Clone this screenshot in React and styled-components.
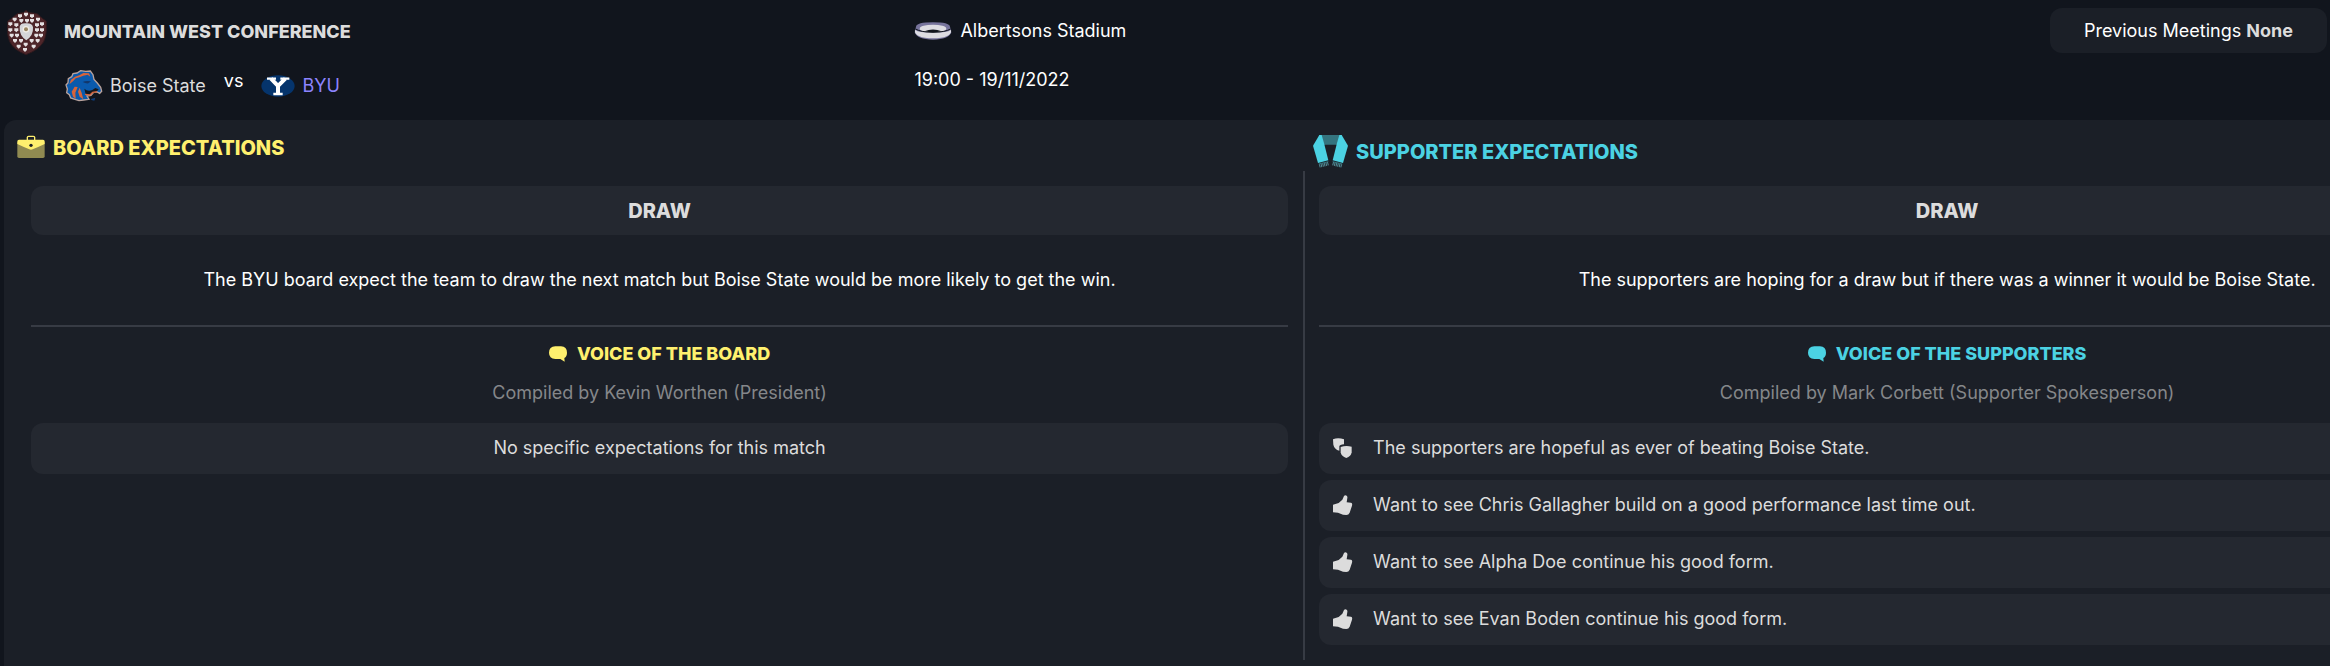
import React from "react";
import styled, { createGlobalStyle } from "styled-components";

const YELLOW = "#fff06e";
const CYAN = "#4bd2e3";

const supporterVoices = [
  { icon: "masks", text: "The supporters are hopeful as ever of beating Boise State." },
  { icon: "thumb", text: "Want to see Chris Gallagher build on a good performance last time out." },
  { icon: "thumb", text: "Want to see Alpha Doe continue his good form." },
  { icon: "thumb", text: "Want to see Evan Boden continue his good form." },
];

// [y, x...] small plates on the conference shield
const shieldPlates = [
  [12, 57],
  [17, 39, 75],
  [27, 23, 93],
  [31, 43, 60, 75],
  [41, 10, 105],
  [44, 28, 90],
  [59, 10, 28, 90, 105],
  [75, 14, 30, 88, 102],
  [91, 24, 42, 74, 92],
  [102, 56],
  [108, 35, 80],
  [118, 54],
];

const ShieldIcon = () => (
  <svg width="40" height="45" viewBox="0 0 120 135" aria-hidden="true">
    <path
      d="M57 1Q64 10 78 9Q92 8 100 20Q110 28 118 34Q120 75 110 95Q95 120 57 134Q20 120 8 95Q-2 70 2 34Q10 28 20 20Q30 8 42 9Q52 9 57 1Z"
      fill="#4d2529"
      stroke="#2f191d"
      strokeWidth="3"
    />
    {shieldPlates.map(([y, ...xs]) =>
      xs.map((x) => (
        <path key={`${x}-${y}`} d={`M${x - 6} ${y - 4}h12v6l-6 6l-6-6Z`} fill="#e4e0e2" />
      ))
    )}
    <path d="M38 50Q40 39 57 40Q76 39 78 52Q80 76 58 91Q36 76 38 50Z" fill="#d5d5d8" />
    <circle cx="57" cy="58" r="10" fill="#f0ece4" />
    <circle cx="57" cy="58" r="6" fill="#9a8662" />
  </svg>
);

const BroncoIcon = () => (
  <svg width="38" height="32" viewBox="0 0 114 96" aria-hidden="true">
    <path
      d="M3 45L9 38L10 26L20 20L24 11L36 9L47 2L62 4L76 3L84 14L87 28L97 39L107 52L110 64L104 70L96 66L86 67L78 76L66 78L72 88L56 90L42 92L30 88L17 84L13 74L5 68L7 57Z"
      fill="#0a5aad"
      stroke="#b9a29c"
      strokeWidth="4"
    />
    <path
      d="M13 43L18 29L30 20L43 16L55 9L72 10L76 20L68 14L55 17L43 22L32 25L24 34Z"
      fill="#d8643a"
    />
    <path d="M29 50L20 65L24 80L32 86L31 68L38 51Z" fill="#d8643a" />
    <path d="M44 53L39 65L44 80L55 88L50 69Z" fill="#d8643a" />
    <path d="M53 36Q62 31 78 34L70 40Q62 41 53 36Z" fill="#12376b" />
    <path d="M58 56Q68 66 82 60L91 54L101 58L94 66L84 68L75 75L62 73Z" fill="#15181f" />
    <path d="M60 73L75 75L83 67L96 65" fill="none" stroke="#d8643a" strokeWidth="4" />
    <path d="M78 87L91 83L88 92L79 90Z" fill="#103d79" />
  </svg>
);

const CougarsIcon = () => (
  <svg width="34" height="22" viewBox="0 0 102 66" aria-hidden="true">
    <ellipse cx="51" cy="33" rx="50" ry="32" fill="#05346c" />
    <g fill="none" stroke="#fff">
      <path d="M30 11L51 33L73 11M51 31V56" strokeWidth="12" />
      <path d="M18 11H45M58 11H85M37 57H65" strokeWidth="7" />
    </g>
  </svg>
);

const StadiumIcon = () => (
  <svg width="38" height="18" viewBox="0 0 114 54" aria-hidden="true">
    <path d="M6 14Q8 1 57 1Q106 1 108 14L112 31Q104 53 57 53Q10 53 2 31Z" fill="#77749c" />
    <ellipse cx="57" cy="20" rx="40" ry="12" fill="#dddce2" />
    <path d="M3 24Q15 32 57 32Q99 32 111 24Q115 48 57 49Q-1 48 3 24Z" fill="#dddce2" />
    <path d="M5 21Q18 30 57 31Q96 30 109 21" fill="none" stroke="#11151d" strokeWidth="3" />
    <path d="M31 28Q57 17 83 28Q57 34 31 28Z" fill="#11151d" />
  </svg>
);

const BriefcaseIcon = () => (
  <svg width="28" height="25" viewBox="0 0 84 75" aria-hidden="true">
    <path d="M31 17V7Q31 4 35 4H49Q53 4 53 7V17" fill="none" stroke={YELLOW} strokeWidth="4" />
    <path d="M1 22H83V64Q83 69 78 69H6Q1 69 1 64Z" fill="#908a51" />
    <path d="M6 14H78Q83 14 83 19V27Q62 37 47 43Q42 45 37 43Q22 37 1 27V19Q1 14 6 14Z" fill={YELLOW} />
    <circle cx="42" cy="31" r="5" fill="#1b1f27" />
  </svg>
);

const ScarfIcon = () => (
  <svg width="35" height="33" viewBox="0 0 105 99" aria-hidden="true">
    <path d="M18 0H87L78 29H27Z" fill="#34747f" />
    <path d="M19 0H26L34 28L46 76L15 84L0 32Z" fill={CYAN} />
    <path d="M86 0H79L71 28L59 76L90 84L105 32Z" fill={CYAN} />
    <path d="M17 87L46 80M88 87L59 80" stroke="#34747f" strokeWidth="3" />
    <path d="M19 93L47 86M86 93L58 86" stroke="#55919b" strokeWidth="10" strokeDasharray="3 2" />
  </svg>
);

const BubbleIcon = ({ color }) => (
  <svg width="18" height="16" viewBox="0 0 54 48" aria-hidden="true">
    <path
      d="M19 1H36Q54 2 54 20Q54 32 46 36L47 47L34 39H19Q0 38 0 20Q0 2 19 1Z"
      fill={color}
    />
  </svg>
);

const MasksIcon = () => (
  <svg width="20" height="20" viewBox="0 0 60 60" aria-hidden="true">
    <path d="M0 4Q15-3 33 4V19Q20 20 19 25V38Q4 34 1 20Z" fill="#dcdcdc" />
    <path d="M23 27Q39 21 56 26V43Q54 56 40 60Q25 56 23 43Z" fill="#dcdcdc" />
  </svg>
);

const ThumbIcon = () => (
  <svg width="20" height="20" viewBox="0 0 60 60" aria-hidden="true">
    <path
      d="M0 29L17 24L28 14L33 3Q36-1 41 2Q44 4 43 9L41 22L54 23Q59 24 57 32L50 53Q47 60 40 60L30 59L15 53L0 52Z"
      fill="#dcdcdc"
    />
  </svg>
);

const App = () => {
  return (
    <>
      <GlobalStyle />
      <Page>
        <Header>
          <Fixture>
            <Competition>
              <ShieldIcon />
              <CompetitionName>MOUNTAIN WEST CONFERENCE</CompetitionName>
            </Competition>
            <Teams>
              <TeamLink href="#boise-state">
                <BroncoIcon />
                Boise State
              </TeamLink>
              <Versus>vs</Versus>
              <TeamLink href="#byu" $own>
                <CougarsIcon />
                BYU
              </TeamLink>
            </Teams>
          </Fixture>
          <Venue>
            <VenueLine>
              <StadiumIcon />
              Albertsons Stadium
            </VenueLine>
            <VenueLine>19:00 - 19/11/2022</VenueLine>
          </Venue>
          <MeetingsButton type="button">
            Previous Meetings <strong>None</strong>
          </MeetingsButton>
        </Header>

        <Panel>
          <section>
            <SectionTitle $color={YELLOW}>
              <BriefcaseIcon />
              BOARD EXPECTATIONS
            </SectionTitle>
            <SectionBody>
              <Outcome>DRAW</Outcome>
              <Summary>
                The BYU board expect the team to draw the next match but Boise State would be more
                likely to get the win.
              </Summary>
              <VoiceTitle $color={YELLOW}>
                <BubbleIcon color={YELLOW} />
                VOICE OF THE BOARD
              </VoiceTitle>
              <Compiled>Compiled by Kevin Worthen (President)</Compiled>
              <VoiceList>
                <VoiceItem $center>No specific expectations for this match</VoiceItem>
              </VoiceList>
            </SectionBody>
          </section>

          <section>
            <SectionTitle $color={CYAN} $divided>
              <ScarfIcon />
              SUPPORTER EXPECTATIONS
            </SectionTitle>
            <SectionBody $divided>
              <Outcome>DRAW</Outcome>
              <Summary>
                The supporters are hoping for a draw but if there was a winner it would be Boise
                State.
              </Summary>
              <VoiceTitle $color={CYAN}>
                <BubbleIcon color={CYAN} />
                VOICE OF THE SUPPORTERS
              </VoiceTitle>
              <Compiled>Compiled by Mark Corbett (Supporter Spokesperson)</Compiled>
              <VoiceList>
                {supporterVoices.map((voice) => (
                  <VoiceItem key={voice.text}>
                    {voice.icon === "masks" ? <MasksIcon /> : <ThumbIcon />}
                    {voice.text}
                  </VoiceItem>
                ))}
              </VoiceList>
            </SectionBody>
          </section>
        </Panel>
      </Page>
    </>
  );
};

export default App;

const GlobalStyle = createGlobalStyle`
  * {
    box-sizing: border-box;
  }

  body {
    margin: 0;
    background: #11151d;
    color: #dcdcdc;
    font-family: Inter, "Liberation Sans", sans-serif;
    font-size: 18px;
    line-height: 28px;
  }

  svg {
    flex-shrink: 0;
  }
`;

const Page = styled.main`
  display: flex;
  flex-direction: column;
  min-height: 100vh;
  padding-left: 4px;
  overflow: hidden;
`;

const Header = styled.header`
  display: grid;
  grid-template-columns: 39fr 49fr auto;
  align-items: start;
  min-height: 120px;
  padding: 8px 3px 0;
`;

const Fixture = styled.div`
  display: flex;
  flex-direction: column;
`;

const Competition = styled.div`
  display: flex;
  align-items: center;
  gap: 17px;
  height: 48px;
`;

const CompetitionName = styled.h1`
  margin: 0;
  font-size: 18px;
  font-weight: 800;
`;

const Teams = styled.div`
  display: flex;
  align-items: center;
  gap: 18px;
  height: 60px;
  padding-left: 58px;
`;

const TeamLink = styled.a`
  display: flex;
  align-items: center;
  gap: 7px;
  color: ${(props) => (props.$own ? "#8c84ff" : "#dcdcdc")};
  text-decoration: none;
`;

const Versus = styled.span`
  padding-bottom: 10px;
  color: #fff;
`;

const Venue = styled.div`
  display: flex;
  flex-direction: column;
  gap: 4px;
  padding-left: 2px;
`;

const VenueLine = styled.div`
  display: flex;
  align-items: center;
  gap: 8px;
  height: 45px;
  color: #fff;
`;

const MeetingsButton = styled.button`
  height: 45px;
  padding: 0 34px;
  border: none;
  border-radius: 12px;
  background: #1b1f27;
  color: #fff;
  font: inherit;
  cursor: pointer;

  strong {
    color: #dcdcdc;
    font-weight: 700;
  }
`;

/* wider than the window, the second column runs off the right edge */
const Panel = styled.div`
  display: grid;
  grid-template-columns: 1fr 1fr;
  flex: 1;
  width: 111.7%;
  border-radius: 12px 0 0 0;
  background: #1b1f27;
`;

const SectionTitle = styled.h2`
  display: flex;
  align-items: center;
  align-content: flex-start;
  flex-wrap: wrap;
  gap: 8px;
  height: 51px;
  margin: 0;
  padding: ${(props) => (props.$divided ? "15px 10px 0" : "15px 13px 0")};
  color: ${(props) => props.$color};
  font-size: 20px;
  font-weight: 800;
  line-height: 24px;
`;

const SectionBody = styled.div`
  padding: ${(props) => (props.$divided ? "15px 27px 15px 14px" : "15px 15px 15px 27px")};
  border-left: ${(props) => (props.$divided ? "2px solid #373b44" : "none")};
`;

const Outcome = styled.div`
  padding: 11px 0 10px;
  border-radius: 12px;
  background: #242830;
  font-size: 20px;
  font-weight: 800;
  text-align: center;
`;

const Summary = styled.p`
  margin: 0;
  padding: 31px 0;
  border-bottom: 2px solid #373b44;
  color: #fff;
  text-align: center;
`;

const VoiceTitle = styled.h3`
  display: flex;
  align-items: center;
  justify-content: center;
  gap: 10px;
  margin: 15px 0 13px;
  color: ${(props) => props.$color};
  font-size: 18px;
  font-weight: 800;
  line-height: 24px;
`;

const Compiled = styled.p`
  margin: 0 0 16px;
  color: #85878a;
  text-align: center;
`;

const VoiceList = styled.ul`
  display: flex;
  flex-direction: column;
  gap: 6px;
  margin: 0;
  padding: 0;
  list-style: none;
`;

const VoiceItem = styled.li`
  display: flex;
  align-items: center;
  justify-content: ${(props) => (props.$center ? "center" : "flex-start")};
  gap: 20px;
  min-height: 51px;
  padding: 0 14px 2px;
  border-radius: 12px;
  background: #242830;
`;
